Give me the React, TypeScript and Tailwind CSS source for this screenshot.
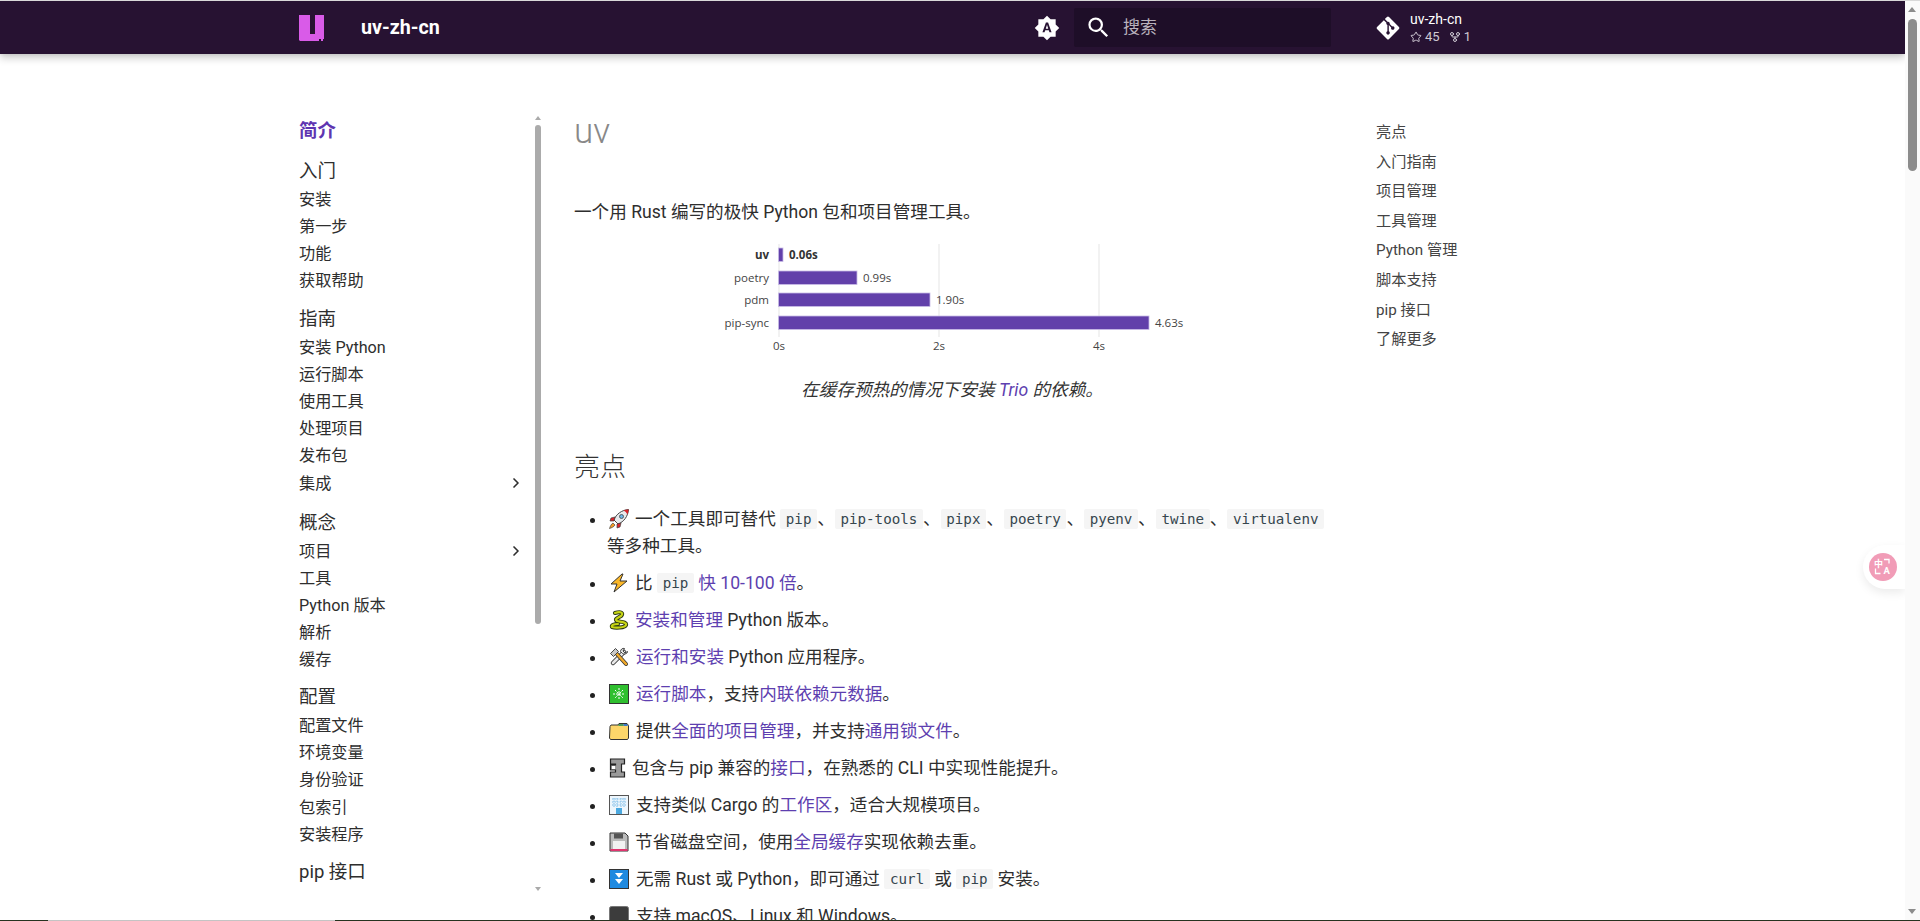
import { ChevronRight, GitFork, Star } from "lucide-react"
import { FaGitAlt } from "react-icons/fa"
import { MdBrightnessAuto, MdSearch } from "react-icons/md"
import type { ReactNode } from "react"

const navSections = [
  { title: "入门", gap: "mt-[10.3px]", items: ["安装", "第一步", "功能", "获取帮助"] },
  { title: "指南", gap: "mt-[10.8px]", items: ["安装 Python", "运行脚本", "使用工具", "处理项目", "发布包", "集成>"] },
  { title: "概念", gap: "mt-[12.2px]", items: ["项目>", "工具", "Python 版本", "解析", "缓存"] },
  { title: "配置", gap: "mt-[10.3px]", items: ["配置文件", "环境变量", "身份验证", "包索引", "安装程序"] },
  { title: "pip 接口", gap: "mt-[10.3px]", items: [] },
]

const tocItems = ["亮点", "入门指南", "项目管理", "工具管理", "Python 管理", "脚本支持", "pip 接口", "了解更多"]

const bars = [
  { name: "uv", value: "0.06s", end: 783, y: 248, bold: true },
  { name: "poetry", value: "0.99s", end: 857, y: 271, bold: false },
  { name: "pdm", value: "1.90s", end: 930, y: 293, bold: false },
  { name: "pip-sync", value: "4.63s", end: 1149, y: 316, bold: false },
]

function Logo() {
  return (
    <svg viewBox="0 0 26 26" className="w-[26px] h-[26px] shrink-0">
      <path d="M0 0h11v19h5V0h9v24h-1v2h-2v-2h-2v2H1l-1-1z" fill="#d95be8" />
    </svg>
  )
}

function Code({ children }: { children: ReactNode }) {
  return (
    <code className="inline-block h-[20px] leading-[20px] px-[5.7px] rounded-[2px] bg-[#f5f5f5] text-[#36464e] text-[14.2px] font-['DejaVu_Sans_Mono',monospace] align-[1px]">
      {children}
    </code>
  )
}

function A({ children }: { children: ReactNode }) {
  return <a className="text-[#5e3fb0]">{children}</a>
}

function Emoji({ children, mr }: { children: ReactNode; mr: string }) {
  return (
    <svg viewBox="0 0 20 20" className={`inline-block w-5 h-5 ml-[2px] align-[-4px] ${mr}`}>
      {children}
    </svg>
  )
}

function Li({ children }: { children: ReactNode }) {
  return (
    <li className="list-disc mb-[10px] leading-[27px] marker:text-[#222]">{children}</li>
  )
}

function Chart() {
  return (
    <svg viewBox="700 235 520 120" className="block w-[520px] h-[120px] ml-[126px] mt-[8.8px]">
      {[779, 939, 1099].map((x) => (
        <line key={x} x1={x} x2={x} y1={244} y2={337} stroke="#eeeeee" strokeWidth="1.5" />
      ))}
      {bars.map((b) => (
        <g key={b.name} fontFamily="'Open Sans', sans-serif" fontSize="11.5" fontWeight={b.bold ? 700 : 400} fill={b.bold ? "#333" : "#444"}>
          <text x={769} y={b.y + 11} textAnchor="end">{b.name}</text>
          <rect x={778.5} y={b.y} width={b.end - 778.5} height={13.5} fill="#6240aa" stroke="#c9bce6" strokeWidth="0.8" />
          <text x={b.end + 6} y={b.y + 11}>{b.value}</text>
        </g>
      ))}
      {[[779, "0s"], [939, "2s"], [1099, "4s"]].map(([x, t]) => (
        <text key={t} x={x} y={350} textAnchor="middle" fontFamily="'Open Sans', sans-serif" fontSize="11.5" fill="#444">{t}</text>
      ))}
    </svg>
  )
}

export default function App() {
  return (
    <div className="flex flex-col h-[921px] overflow-hidden bg-white text-[#2e2e2e] font-['Roboto','Noto_Sans_CJK_SC',sans-serif]">
      <div className="h-px shrink-0 bg-[#d9d9d9]" />
      <div className="flex flex-1 min-h-0">
        <div className="flex-1 min-w-0 relative overflow-hidden">
          {/* Header */}
          <header className="h-[53px] bg-[#271232] flex items-center pl-[299px] text-white shadow-[0_0_4px_#0000001a,0_4px_8px_#00000033] relative z-10">
            <Logo />
            <span className="ml-[36px] w-[659px] text-[19.7px] font-bold">uv-zh-cn</span>
            <MdBrightnessAuto className="w-[26px] h-[26px] ml-[14px]" />
            <div className="ml-[14px] w-[257px] h-[39px] rounded-[2px] bg-[#1e0e28] flex items-center pl-[11px] text-[#b9b2bd]">
              <MdSearch className="w-[27px] h-[27px] text-white" />
              <span className="ml-[11px] text-[17px]">搜索</span>
            </div>
            <FaGitAlt className="w-[26px] h-[26px] ml-[44px]" />
            <div className="ml-[9px] leading-none">
              <div className="text-[14px]">uv-zh-cn</div>
              <div className="flex items-center mt-[4px] text-[13px] text-[#cfc9d3]">
                <Star className="w-[12px] h-[12px] mr-[3px]" />
                45
                <GitFork className="w-[12px] h-[12px] ml-[9px] mr-[3px]" />
                1
              </div>
            </div>
          </header>

          <div className="flex pl-[299px]">
            {/* Sidebar */}
            <nav className="relative w-[242px] shrink-0 pt-[62px] h-[867px] text-[16.2px]">
              <div className="text-[#5e35b1] font-bold text-[18.4px] h-[31px] leading-[30px]">简介</div>
              {navSections.map((section) => (
                <div key={section.title} className={section.gap}>
                  <div className="text-[18.5px] h-[28.8px] leading-[28px]">{section.title}</div>
                  {section.items.map((item) => (
                    <div key={item} className="h-[27.1px] leading-[27px] pr-[17px] flex items-center justify-between">
                      {item.replace(">", "")}
                      {item.endsWith(">") && <ChevronRight className="w-[16px] h-[16px]" strokeWidth={2.5} />}
                    </div>
                  ))}
                </div>
              ))}
              <div className="absolute right-0 top-[71px] w-[6px] h-[499px] rounded-[3px] bg-[#ababab]" />
              <div className="absolute right-0 top-[62px] w-0 h-0 border-x-[3px] border-x-transparent border-b-[4px] border-b-[#aaaaaa]" />
              <div className="absolute right-0 top-[833px] w-0 h-0 border-x-[3px] border-x-transparent border-t-[4px] border-t-[#aaaaaa]" />
            </nav>

            {/* Content */}
            <main className="ml-[33px] w-[756px] shrink-0 text-[17.6px] leading-[27px]">
              <h1 className="mt-[57.6px] text-[35px] leading-[40px] font-light text-[#888]">uv</h1>
              <p className="mt-[47.6px]">一个用 Rust 编写的极快 Python 包和项目管理工具。</p>
              <Chart />
              <p className="mt-[22.3px] text-center italic text-[#333]">
                在缓存预热的情况下安装 <A>Trio</A> 的依赖。
              </p>
              <h2 className="mt-[45.6px] text-[26px] leading-[34px] font-light text-[#333]">亮点</h2>
              <ul className="mt-[22.3px] pl-[33px]">
                <Li>
                  <Emoji mr="mr-[6px]">
                    <path d="M19.5.5C13 1 7 5 5 11l4 4c6-2 10-8 10.500-14.500z" fill="#e8eaed" stroke="#444" strokeWidth="1" />
                    <path d="M14.500 1.600c1.500.6 3.300 2.300 3.800 3.900.9-1.700 1.200-3.400 1.200-5-1.800.1-3.400.5-5 1.100z" fill="#d8232a" />
                    <circle cx="12.500" cy="7.500" r="2" fill="#6bb5e8" stroke="#444" strokeWidth=".8" />
                    <path d="M6 8 2 9l-1 3h4zM12 14l-1 4-3 1v-4z" fill="#d8232a" stroke="#444" strokeWidth=".7" />
                    <path d="M4 14c-2 1-3 4-3.500 5.500C2 19 5 18 6 16z" fill="#f59b23" stroke="#444" strokeWidth=".7" />
                  </Emoji>
                  一个工具即可替代 <Code>pip</Code>、<Code>pip-tools</Code>、<Code>pipx</Code>、<Code>poetry</Code>、<Code>pyenv</Code>、<Code>twine</Code>、<Code>virtualenv</Code> 等多种工具。
                </Li>
                <Li>
                  <Emoji mr="mr-[6px]">
                    <path d="M13 1 2 11h6l-3 8 13-11h-7l3-7z" fill="#fbb728" stroke="#333" strokeWidth="1" strokeLinejoin="round" />
                  </Emoji>
                  比 <Code>pip</Code> <A>快 10-100 倍</A>。
                </Li>
                <Li>
                  <Emoji mr="mr-[6px]">
                    <path d="M6 3C12 1 15 3 12 6 9 8 5 9 8 11c4 1 10 1 9 4-1 3-11 3-14 2-1-2 2-3 6-3" fill="none" stroke="#2d3a12" strokeWidth="4" strokeLinecap="round" strokeLinejoin="round" />
                    <path d="M6 3C12 1 15 3 12 6 9 8 5 9 8 11c4 1 10 1 9 4-1 3-11 3-14 2-1-2 2-3 6-3" fill="none" stroke="#c6d415" strokeWidth="2.200" strokeLinecap="round" strokeLinejoin="round" />
                  </Emoji>
                  <A>安装和管理</A> Python 版本。
                </Li>
                <Li>
                  <Emoji mr="mr-[7px]">
                    <path d="M15 5 4 16" stroke="#333" strokeWidth="4.500" strokeLinecap="round" />
                    <path d="M15 5 4 16" stroke="#e8e8e8" strokeWidth="2.800" strokeLinecap="round" />
                    <path d="M18.500 4.500 16 6l-2-2 1.500-2.500c-2-.7-4 1-4 3l2 2c1.500 1.200 5.500.2 5-2z" fill="#e8e8e8" stroke="#333" strokeWidth=".9" />
                    <path d="M7 6 17 17" stroke="#333" strokeWidth="4" strokeLinecap="round" />
                    <path d="M7 6 17 17" stroke="#f0a92a" strokeWidth="2.500" strokeLinecap="round" />
                    <path d="M1.500 6.500 6.500 1.500l3 3-5 5z" fill="#c9c9c9" stroke="#333" strokeWidth=".9" />
                  </Emoji>
                  <A>运行和安装</A> Python 应用程序。
                </Li>
                <Li>
                  <Emoji mr="mr-[7px]">
                    <rect x=".5" y=".5" width="19" height="19" fill="#2fbf2f" stroke="#333" />
                    <path d="M10 4v12M4 10h12M6 6l8 8M14 6l-8 8" stroke="#fff" strokeWidth="1" strokeDasharray="2 1" />
                  </Emoji>
                  <A>运行脚本</A>，支持<A>内联依赖元数据</A>。
                </Li>
                <Li>
                  <Emoji mr="mr-[7px]">
                    <path d="M1 5.500 2 4h7l1-1.500h8l1.500 2V17l-1 1.500H1.500L.5 17z" fill="#fcd66a" stroke="#333" strokeWidth="1" />
                    <path d="M10 3h4l1 2H9z" fill="#4a9c5a" />
                    <path d="M14 3h4l1 2h-4z" fill="#3d78c9" />
                  </Emoji>
                  提供<A>全面的项目管理</A>，并支持<A>通用锁文件</A>。
                </Li>
                <Li>
                  <Emoji mr="mr-[3px]">
                    <path d="M1.500 1h14v5h-3v8h3v5h-14v-5h5v-2h-5V7h5V6h-5z" fill="#9a9a9a" stroke="#222" strokeWidth="1.200" />
                    <rect x="3" y="8" width="3" height="3" fill="#fff" />
                  </Emoji>
                  包含与 pip 兼容的<A>接口</A>，在熟悉的 CLI 中实现性能提升。
                </Li>
                <Li>
                  <Emoji mr="mr-[7px]">
                    <rect x=".5" y=".5" width="19" height="19" fill="#eef6fc" stroke="#555" />
                    <path d="M3 4h14M3 7h14M3 10h14M5 3v9M8 3v9M12 3v9M15 3v9" stroke="#7fbde8" strokeWidth="1" strokeDasharray="1.500 1" />
                    <rect x="7" y="13" width="6" height="6" fill="#4ba9e0" />
                  </Emoji>
                  支持类似 Cargo 的<A>工作区</A>，适合大规模项目。
                </Li>
                <Li>
                  <Emoji mr="mr-[6px]">
                    <path d="M1 1h15l3 3v15H1z" fill="#bbb" stroke="#333" strokeWidth="1" />
                    <rect x="5" y="1.500" width="9" height="5" fill="#555" />
                    <rect x="4" y="9" width="12" height="8" fill="#f2f2f2" />
                    <rect x="1.500" y="17" width="17" height="2" fill="#e0356f" />
                  </Emoji>
                  节省磁盘空间，使用<A>全局缓存</A>实现依赖去重。
                </Li>
                <Li>
                  <Emoji mr="mr-[7px]">
                    <rect x=".5" y=".5" width="19" height="19" fill="#1f8ae0" stroke="#333" />
                    <path d="M6 4h8l-4 5zM6 10h8l-4 5z" fill="#fff" />
                  </Emoji>
                  无需 Rust 或 Python，即可通过 <Code>curl</Code> 或 <Code>pip</Code> 安装。
                </Li>
                <Li>
                  <Emoji mr="mr-[7px]">
                    <rect x=".5" y=".5" width="19" height="19" rx="2" fill="#3c3c3c" stroke="#777" />
                  </Emoji>
                  支持 macOS、Linux 和 Windows。
                </Li>
              </ul>
            </main>

            {/* TOC */}
            <aside className="ml-[46px] pt-[64px] text-[15.2px] text-[#444]">
              {tocItems.map((item) => (
                <div key={item} className="h-[29.6px] leading-[29.6px]">{item}</div>
              ))}
            </aside>
          </div>

          {/* Translate widget */}
          <div className="absolute right-0 top-[544px] w-[42px] h-[44px] rounded-l-[22px] bg-white shadow-[0_4px_10px_#00000014] flex items-center pl-[6px]">
            <svg viewBox="0 0 28 28" className="w-[28px] h-[28px]">
              <circle cx="14" cy="14" r="14" fill="#f19cb7" />
              <text x="5" y="14" fontSize="9" fontWeight="700" fill="#fff" fontFamily="'Noto Sans CJK SC', sans-serif">中</text>
              <text x="14.5" y="21" fontSize="9.5" fontWeight="700" fill="#fff" fontFamily="Roboto, sans-serif">A</text>
              <path d="M15 6.500h5v4M6.500 15.500v5h5" fill="none" stroke="#fff" strokeWidth="1.300" />
            </svg>
          </div>
        </div>

        {/* Page scrollbar */}
        <div className="relative w-[15px] shrink-0 bg-[#fafafa]">
          <div className="absolute left-[3px] top-[6px] w-0 h-0 border-x-[4.5px] border-x-transparent border-b-[5px] border-b-[#8c8c8c]" />
          <div className="absolute left-[3px] top-[18px] w-[9px] h-[152px] rounded-[5px] bg-[#8c8c8c]" />
          <div className="absolute left-[3px] bottom-[6px] w-0 h-0 border-x-[4.5px] border-x-transparent border-t-[5px] border-t-[#8c8c8c]" />
        </div>
      </div>
      {/* Bottom edge of the window */}
      <div className="flex h-px shrink-0 bg-[#26321f]">
        <div className="w-[48px]" />
        <div className="w-[287px] bg-[#c4c4c4]" />
      </div>
    </div>
  )
}
